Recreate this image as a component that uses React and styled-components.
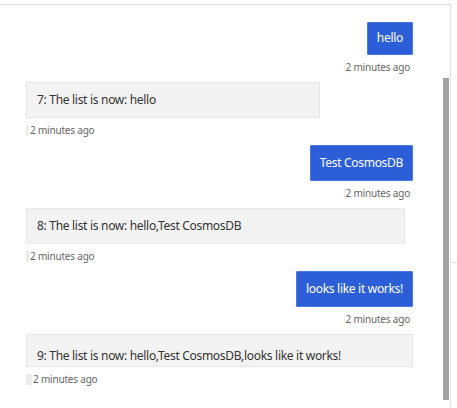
import React from "react"
import styled, { createGlobalStyle } from "styled-components"

const GlobalStyle = createGlobalStyle`
  html, body {
    margin: 0;
    padding: 0;
    background: #fff;
  }
  body {
    font-family: "Noto Sans", "Open Sans", sans-serif;
  }
`

const Page = styled.div`
  display: flex;
  width: 457px;
  height: 408px;
  padding-top: 4px;
  box-sizing: border-box;
  overflow: hidden;
`

const Panel = styled.div`
  display: flex;
  width: 451px;
  height: 404px;
  box-sizing: border-box;
  border-top: 1px solid #dcdcdc;
  border-right: 1px solid #e2e2e2;
`

const Feed = styled.div`
  flex: 1;
  display: flex;
  flex-direction: column;
  padding: 17px 30px 0 26px;
`

const Track = styled.div`
  width: 7px;
`

const Thumb = styled.div`
  margin-top: 73px;
  width: 6px;
  height: 322px;
  background: #a3a3a3;
`

const Side = styled.div`
  flex: 1;
  display: flex;
  flex-direction: column;
`

const SideBox = styled.div`
  margin-top: 258px;
  flex: 1;
  border-top: 1px solid #e2e2e2;
`

const Message = styled.div`
  display: flex;
  flex-direction: column;
  align-items: ${(p) => (p.$mine ? "flex-end" : "flex-start")};
  margin-bottom: 8px;
`

const Bubble = styled.div`
  box-sizing: border-box;
  font-size: 12px;
  letter-spacing: -0.3px;
  line-height: 16px;
  border-radius: 1px;
  ${(p) =>
    p.$mine
      ? `
    background: #2c5fd7;
    color: #fff;
    border: 1px solid #4a78e0;
    padding: ${p.$pad || "9px 9px"};
  `
      : `
    background: #f3f3f3;
    color: #333;
    border: 1px solid #e6e6e6;
    padding: ${p.$pad || "9px 10px"};
  `}
  width: ${(p) => (p.$width ? `${p.$width}px` : "auto")};
  white-space: nowrap;
`

const Stamp = styled.div`
  display: flex;
  align-items: center;
  margin-top: 5px;
  margin-right: ${(p) => (p.$mine ? "3px" : "0")};
  font-size: 10px;
  letter-spacing: -0.2px;
  line-height: 14px;
  color: #666;
`

const Mark = styled.span`
  display: inline-block;
  width: ${(p) => p.$w}px;
  height: 11px;
  margin-right: 1px;
  background: #ececec;
`

const messages = [
  { mine: true, text: "hello", pad: "7px 9px 8px", mark: 1 },
  { mine: false, text: "7: The list is now: hello", width: 294, mark: 3 },
  { mine: true, text: "Test CosmosDB", mark: 1 },
  { mine: false, text: "8: The list is now: hello,Test CosmosDB", width: 379, mark: 3 },
  { mine: true, text: "looks like it works!", mark: 1 },
  {
    mine: false,
    text: "9: The list is now: hello,Test CosmosDB,looks like it works!",
    width: 387,
    pad: "13px 10px 2px",
    mark: 6,
  },
]

export default function App() {
  return (
    <>
      <GlobalStyle />
      <Page>
        <Panel>
          <Feed>
            {messages.map((m, i) => (
              <Message key={i} $mine={m.mine}>
                <Bubble $mine={m.mine} $width={m.width} $pad={m.pad}>
                  {m.text}
                </Bubble>
                <Stamp $mine={m.mine}>
                  <Mark $w={m.mark} />
                  2 minutes ago
                </Stamp>
              </Message>
            ))}
          </Feed>
          <Track>
            <Thumb />
          </Track>
        </Panel>
        <Side>
          <SideBox />
        </Side>
      </Page>
    </>
  )
}
